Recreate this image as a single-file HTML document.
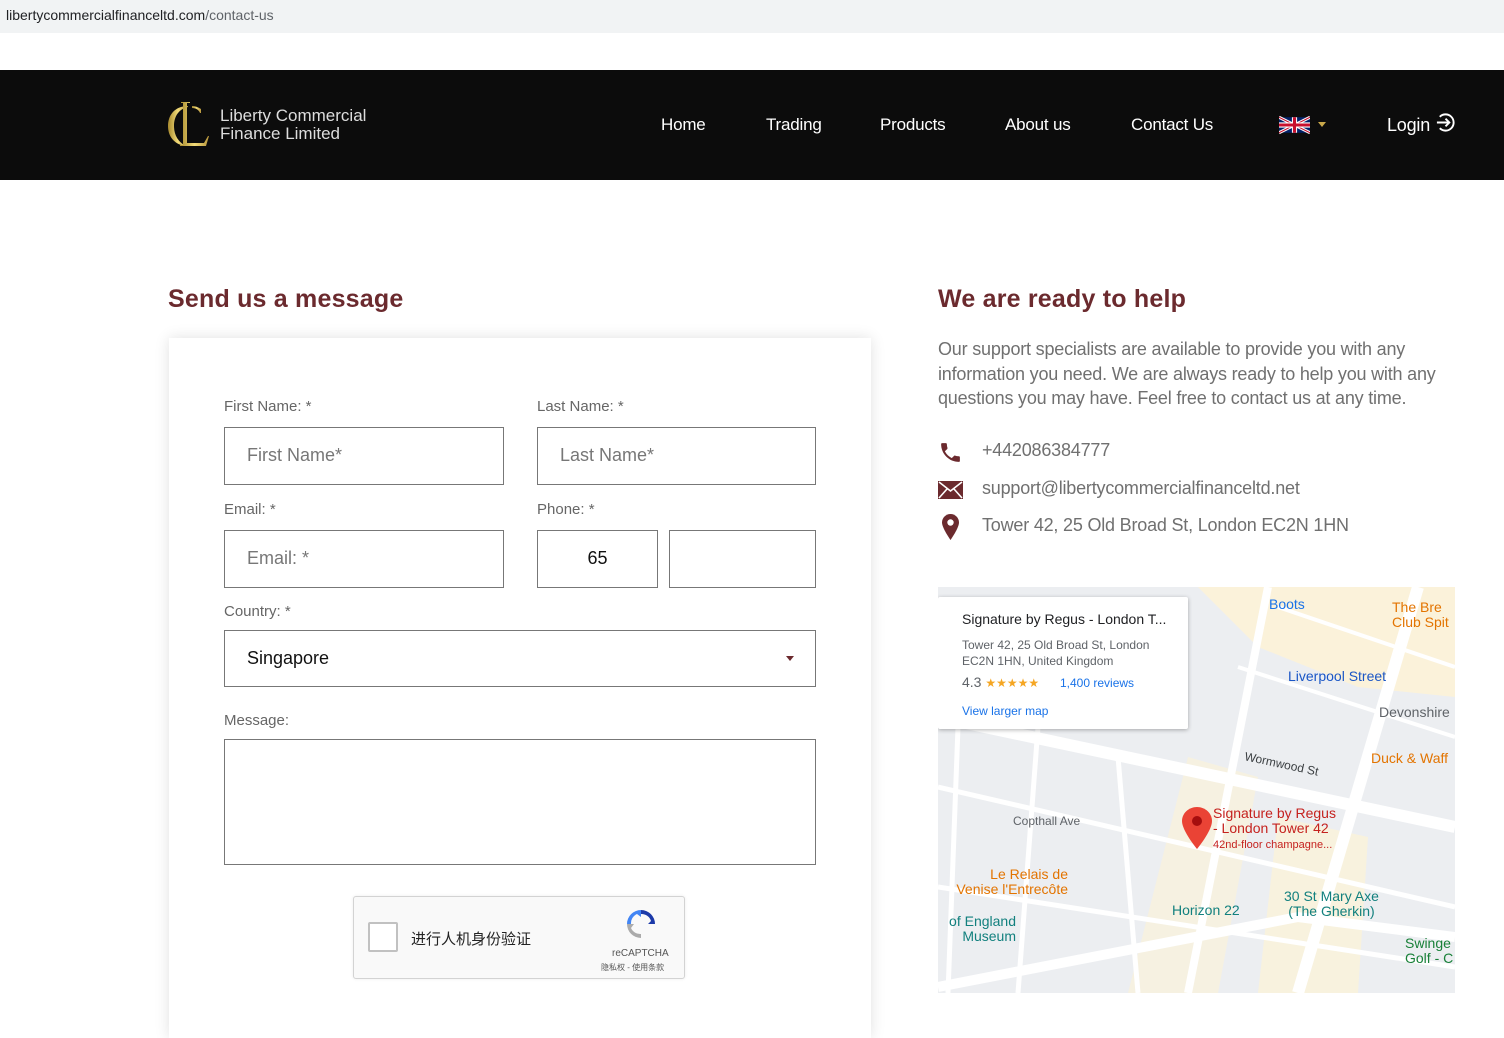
<!DOCTYPE html>
<html><head><meta charset="utf-8"><style>
*{margin:0;padding:0;box-sizing:border-box}
body{width:1504px;height:993px;overflow:hidden;background:#fff;font-family:"Liberation Sans",sans-serif;position:relative}
.abs{position:absolute}
.url{left:0;top:0;width:1504px;height:33px;background:#f1f3f4;font-size:14px;color:#202124;padding:7px 6px}
.url span{color:#5f6368}
.nav{left:0;top:70px;width:1504px;height:110px;background:#0c0c0c}
.nav a{position:absolute;top:45px;color:#fff;font-size:17px;text-decoration:none;letter-spacing:-0.2px}
h2{position:absolute;font-size:25px;color:#6b2a2e;font-weight:bold;letter-spacing:0.2px}
.card{left:169px;top:338px;width:702px;height:700px;background:#fff;box-shadow:0 0 14px rgba(0,0,0,.12)}
.lbl{position:absolute;font-size:15px;color:#666}
.inp{position:absolute;border:1px solid #777;height:58px;font-size:18px;color:#777;padding:17px 22px}
.rt{color:#707070;font-size:18px;line-height:24.5px;letter-spacing:-0.2px}
</style></head><body>
<div class="abs url">libertycommercialfinanceltd.com<span>/contact-us</span></div>
<div class="abs nav">
 <svg class="abs" style="left:166px;top:30px" width="46" height="50" viewBox="0 0 46 50">
  <defs><linearGradient id="g" x1="0" x2="1"><stop offset="0" stop-color="#a88a2e"/><stop offset=".5" stop-color="#f3dc7a"/><stop offset="1" stop-color="#b8953a"/></linearGradient></defs>
  <path d="M22 6 C8 6 2 16 2 26 C2 38 10 45 20 46 C12 42 8 35 8 26 C8 16 13 9 22 7 Z" fill="url(#g)"/>
  <path d="M15 2 H24 V3 H21 V43 H38 L42 36 H43 L40 46 H14 V45 H17 V3 H15 Z" fill="url(#g)"/>
  <path d="M26 8 C30 8 33 10 34 13 L35 13 L35 9 C32 7 29 6 26 6Z" fill="url(#g)"/>
 </svg>
 <div class="abs" style="left:220px;top:37px;color:#ddd;font-size:17px;line-height:18px">Liberty Commercial<br>Finance Limited</div>
 <a style="left:661px">Home</a><a style="left:766px">Trading</a><a style="left:880px">Products</a><a style="left:1005px">About us</a><a style="left:1131px">Contact Us</a>
 <svg class="abs" style="left:1279px;top:45px" width="31" height="20" viewBox="0 0 60 30"><rect width="60" height="30" fill="#012169"/><path d="M0 0L60 30M60 0L0 30" stroke="#fff" stroke-width="6"/><path d="M0 0L60 30M60 0L0 30" stroke="#C8102E" stroke-width="2"/><path d="M30 0V30M0 15H60" stroke="#fff" stroke-width="10"/><path d="M30 0V30M0 15H60" stroke="#C8102E" stroke-width="6"/></svg>
 <div class="abs" style="left:1318px;top:52px;width:0;height:0;border-left:4px solid transparent;border-right:4px solid transparent;border-top:5px solid #c9a84a"></div>
 <a style="left:1387px;font-size:18px">Login</a>
 <svg class="abs" style="left:1435px;top:42px" width="21" height="21" viewBox="0 0 22 22" fill="none" stroke="#fff" stroke-width="2"><path d="M5 5A8.5 8.5 0 1 1 5 17"/><path d="M2 11H15M11 7L15 11L11 15"/></svg>
</div>

<h2 style="left:168px;top:285px">Send us a message</h2>
<h2 style="left:938px;top:285px">We are ready to help</h2>

<div class="abs card"></div>
<div class="lbl" style="left:224px;top:398px">First Name: *</div>
<div class="lbl" style="left:537px;top:398px">Last Name: *</div>
<div class="inp" style="left:224px;top:427px;width:280px">First Name*</div>
<div class="inp" style="left:537px;top:427px;width:279px">Last Name*</div>
<div class="lbl" style="left:224px;top:501px">Email: *</div>
<div class="lbl" style="left:537px;top:501px">Phone: *</div>
<div class="inp" style="left:224px;top:530px;width:280px">Email: *</div>
<div class="inp" style="left:537px;top:530px;width:121px;color:#111;text-align:center;padding:17px 0">65</div>
<div class="inp" style="left:669px;top:530px;width:147px"></div>
<div class="lbl" style="left:224px;top:603px">Country: *</div>
<div class="inp" style="left:224px;top:630px;width:592px;height:57px;color:#111">Singapore</div>
<div class="abs" style="left:786px;top:656px;border-left:4px solid transparent;border-right:4px solid transparent;border-top:5px solid #6b2a2e"></div>
<div class="lbl" style="left:224px;top:712px">Message:</div>
<div class="inp" style="left:224px;top:739px;width:592px;height:126px"></div>

<div class="abs" style="left:353px;top:896px;width:332px;height:83px;background:#f9f9f9;border:1px solid #d3d3d3;border-radius:3px;box-shadow:0 0 3px rgba(0,0,0,.08)">
 <div class="abs" style="left:14px;top:25px;width:30px;height:30px;background:#fff;border:2px solid #c1c1c1;border-radius:2px"></div>
 <div class="abs" style="left:57px;top:31px;font-size:15px;color:#222;font-family:'Liberation Sans','Noto Sans CJK SC',sans-serif">进行人机身份验证</div>
 <svg class="abs" style="left:270px;top:10px" width="34" height="34" viewBox="0 0 34 34"><path d="M17 3A14 14 0 0 1 31 17H24L27 14A10 10 0 0 0 17 7Z" fill="#1c3aa9"/><path d="M3 17A14 14 0 0 1 17 3V10L13 7A10 10 0 0 0 7 17Z" fill="#4285f4"/><path d="M17 31A14 14 0 0 1 3 17H10L7 21A10 10 0 0 0 17 27Z" fill="#ababab"/></svg>
 <div class="abs" style="left:258px;top:51px;font-size:10px;color:#555">reCAPTCHA</div>
 <div class="abs" style="left:247px;top:65px;font-size:8px;color:#555;font-family:'Liberation Sans','Noto Sans CJK SC',sans-serif">隐私权 - 使用条款</div>
</div>

<div class="abs rt" style="left:938px;top:337px;width:520px">Our support specialists are available to provide you with any information you need. We are always ready to help you with any questions you may have. Feel free to contact us at any time.</div>
<svg class="abs" style="left:938px;top:440px" width="25" height="25" viewBox="0 0 24 24"><path fill="#6b2a2e" d="M6.6 10.8c1.4 2.8 3.8 5.1 6.6 6.6l2.2-2.2c.3-.3.7-.4 1-.2 1.1.4 2.300.6 3.6.6.6 0 1 .4 1 1V20c0 .6-.4 1-1 1C10.6 21 3 13.4 3 4c0-.6.4-1 1-1h3.5c.6 0 1 .4 1 1 0 1.3.2 2.5.6 3.6.1.3 0 .7-.2 1z"/></svg>
<div class="abs rt" style="left:982px;top:438px">+442086384777</div>
<svg class="abs" style="left:938px;top:481px" width="25" height="18" viewBox="0 0 25 18"><rect width="25" height="18" fill="#6b2a2e"/><path d="M1 1L12.5 10L24 1M1 17L9 8M24 17L16 8" stroke="#fff" stroke-width="1.6" fill="none"/></svg>
<div class="abs rt" style="left:982px;top:476px">support@libertycommercialfinanceltd.net</div>
<svg class="abs" style="left:942px;top:514px" width="17" height="26" viewBox="0 0 17 26"><path fill="#6b2a2e" d="M8.5 0C3.8 0 0 3.8 0 8.5 0 14 8.5 26 8.5 26S17 14 17 8.5C17 3.8 13.2 0 8.5 0z"/><circle cx="8.5" cy="8.5" r="3.2" fill="#fff"/></svg>
<div class="abs rt" style="left:982px;top:513px">Tower 42, 25 Old Broad St, London EC2N 1HN</div>

<div class="abs" style="left:938px;top:587px;width:517px;height:406px;overflow:hidden;background:#eceef1">
 <svg width="517" height="406" viewBox="0 0 517 406" style="position:absolute;left:0;top:0" fill="none">
  <path d="M260 0H517V110L420 100 320 60Z" fill="#fbf2da"/>
  <path d="M250 170L320 190 280 406H190Z" fill="#fbf2da" opacity=".7"/>
  <path d="M340 230L430 250 420 406H320Z" fill="#fbf2da" opacity=".8"/>
  <path d="M0 130L517 240" stroke="#fff" stroke-width="12"/>
  <path d="M0 400L360 330 517 350" stroke="#fff" stroke-width="10"/>
  <path d="M330 0L250 406" stroke="#fff" stroke-width="8"/>
  <path d="M480 0L360 406" stroke="#fff" stroke-width="12"/>
  <path d="M20 140L10 406M100 140L80 406M0 200L517 320M180 170L200 406M0 300L517 380" stroke="#fff" stroke-width="5"/>
  <path d="M340 20L517 80M300 80L517 150" stroke="#fff" stroke-width="4"/>
 </svg>
 <div class="abs" style="left:0;top:10px;width:250px;height:132px;background:#fff;box-shadow:0 1px 4px rgba(0,0,0,.3);border-radius:2px"></div>
 <div class="abs" style="left:24px;top:24px;font-size:14px;color:#202124">Signature by Regus - London T...</div>
 <div class="abs" style="left:24px;top:50px;font-size:12px;color:#5f6368;line-height:16px">Tower 42, 25 Old Broad St, London<br>EC2N 1HN, United Kingdom</div>
 <div class="abs" style="left:24px;top:87px;font-size:14px;color:#5f6368">4.3 <span style="color:#f5a623;font-size:12px">★★★★★</span></div>
 <div class="abs" style="left:122px;top:89px;font-size:12px;color:#1a73e8">1,400 reviews</div>
 <div class="abs" style="left:24px;top:117px;font-size:12px;color:#1a73e8">View larger map</div>
 <div class="abs" style="left:331px;top:9px;font-size:14px;color:#1a73e8">Boots</div>
 <div class="abs" style="left:350px;top:81px;font-size:14px;color:#1a56c6">Liverpool Street</div>
 <div class="abs" style="left:441px;top:117px;font-size:14px;color:#5f6368">Devonshire</div>
 <div class="abs" style="left:454px;top:13px;font-size:14px;color:#e37400;line-height:15px;white-space:nowrap">The Bre<br>Club Spit</div>
 <div class="abs" style="left:433px;top:163px;font-size:14px;color:#e37400;white-space:nowrap">Duck &amp; Waff</div>
 <div class="abs" style="left:306px;top:170px;font-size:12px;color:#3c4043;transform:rotate(12deg)">Wormwood St</div>
 <div class="abs" style="left:75px;top:227px;font-size:12px;color:#5f6368">Copthall Ave</div>
 <svg class="abs" style="left:244px;top:220px" width="30" height="42" viewBox="0 0 30 42"><path d="M15 0C7 0 0 6 0 14 0 24 15 42 15 42S30 24 30 14C30 6 23 0 15 0z" fill="#ea4335"/><circle cx="15" cy="14" r="5" fill="#a50e0e"/></svg>
 <div class="abs" style="left:275px;top:219px;font-size:14px;color:#c5221f;line-height:15px">Signature by Regus<br>- London Tower 42<br><span style="font-size:11px">42nd-floor champagne...</span></div>
 <div class="abs" style="left:8px;top:280px;font-size:14px;color:#e37400;line-height:15px;text-align:right;width:122px">Le Relais de<br>Venise l'Entrecôte</div>
 <div class="abs" style="left:0;top:327px;font-size:14px;color:#12807e;line-height:15px;text-align:right;width:78px">of England<br>Museum</div>
 <div class="abs" style="left:234px;top:315px;font-size:14px;color:#12807e">Horizon 22</div>
 <div class="abs" style="left:346px;top:302px;font-size:14px;color:#12807e;line-height:15px;text-align:center">30 St Mary Axe<br>(The Gherkin)</div>
 <div class="abs" style="left:467px;top:349px;font-size:14px;color:#188038;line-height:15px">Swinge<br>Golf - C</div>
</div>
</body></html>
